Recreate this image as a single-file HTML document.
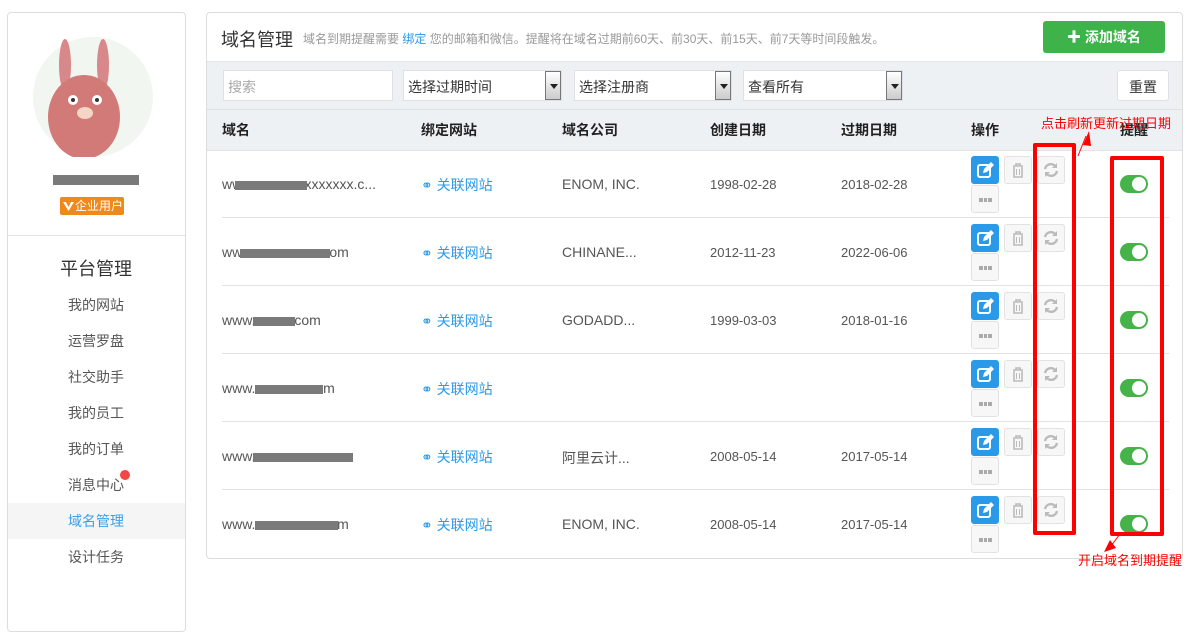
<!DOCTYPE html>
<html><head><meta charset="utf-8"><style>
*{box-sizing:border-box;margin:0;padding:0}
body{width:1194px;height:574px;overflow:hidden;background:#fff;font-family:"Liberation Sans","Noto Sans CJK SC",sans-serif;position:relative;color:#555}
.abs{position:absolute}
.side{left:7px;top:12px;width:179px;height:620px;border:1px solid #ddd;border-radius:4px;background:#fff}
.menu{position:absolute;left:68px;font-size:14px;color:#555}
.main{left:206px;top:12px;width:977px;height:547px;border:1px solid #ddd;border-radius:4px;background:#fff;overflow:hidden}
.inp{position:absolute;top:70px;height:31px;background:#fff;border:1px solid #dde0e4;font-size:14px;color:#333;padding:6px 4px}
.arrow{position:absolute;right:0;top:0;width:16px;height:29px;border:1px solid #777;background:linear-gradient(#fff,#ccc)}
.arrow:after{content:"";position:absolute;left:4px;top:12px;border:4px solid transparent;border-top:5px solid #222}
.th{position:absolute;top:120px;font-size:14px;font-weight:bold;color:#222}
.td{position:absolute;font-size:14px;color:#555}
.link{color:#2a9ae8}
.blur{position:absolute;height:9px;background:#7a7a7a}
.line{position:absolute;left:222px;width:947px;height:1px;background:#e3e3e3}
.b{position:absolute;width:28px;height:28px;border:1px solid #e2e2e2;border-radius:3px;background:#f7f7f7}
.be{background:#2a9ae8;border-color:#2a9ae8}
.tog{position:absolute;width:28px;height:18px;border-radius:9px;background:#45b349}
.tog:after{content:"";position:absolute;right:2px;top:2px;width:14px;height:14px;border-radius:50%;background:#fff}
.red{position:absolute;border:4px solid #f00;border-radius:2px}
</style></head><body>
<div class="abs side">
  <div class="abs" style="left:25px;top:24px;width:120px;height:120px;border-radius:50%;background:#f1f6f1"></div>
  <svg class="abs" style="left:25px;top:24px" width="120" height="120" viewBox="0 0 120 120">
    <ellipse cx="32" cy="28" rx="6" ry="26" fill="#d8888a"/><ellipse cx="70" cy="28" rx="6" ry="26" fill="#d8888a"/>
    <ellipse cx="51" cy="80" rx="36" ry="42" fill="#d27a78"/>
    <circle cx="40" cy="63" r="5" fill="#fff"/><circle cx="64" cy="63" r="5" fill="#fff"/>
    <circle cx="40" cy="63" r="2" fill="#333"/><circle cx="64" cy="63" r="2" fill="#333"/>
    <ellipse cx="52" cy="76" rx="8" ry="6" fill="#f3d6c6"/>
  </svg>
  <div class="abs" style="left:45px;top:162px;width:86px;height:10px;background:#7a7a7a"></div>
  <div class="abs" style="left:52px;top:184px;width:64px;height:18px;background:#f0891c;border-radius:2px;color:#fff;font-size:12px;line-height:18px;padding-left:15px;white-space:nowrap;overflow:visible">企业用户</div>
  <svg class="abs" style="left:54px;top:187px" width="13" height="12"><path d="M1 2h3l2.5 5L9 2h3L6.5 11z" fill="#fff"/></svg>
  <div class="abs" style="left:0;top:222px;width:177px;height:1px;background:#e3e3e3"></div>
  <div class="abs" style="left:52px;top:242px;font-size:18px;color:#333">平台管理</div>
  <div class="menu" style="top:282px;left:60px">我的网站</div>
  <div class="menu" style="top:318px;left:60px">运营罗盘</div>
  <div class="menu" style="top:354px;left:60px">社交助手</div>
  <div class="menu" style="top:390px;left:60px">我的员工</div>
  <div class="menu" style="top:426px;left:60px">我的订单</div>
  <div class="menu" style="top:462px;left:60px">消息中心</div>
  <div class="abs" style="left:112px;top:457px;width:10px;height:10px;border-radius:50%;background:#f04848"></div>
  <div class="abs" style="left:0;top:490px;width:177px;height:36px;background:#f5f5f5"></div>
  <div class="menu" style="top:498px;left:60px;color:#3a9fe8">域名管理</div>
  <div class="menu" style="top:534px;left:60px">设计任务</div>
</div>
<div class="abs main">
  <div class="abs" style="left:14px;top:13px;font-size:18px;color:#333">域名管理</div>
  <div class="abs" style="left:96px;top:17px;font-size:12px;color:#999">域名到期提醒需要 <span class="link">绑定</span> 您的邮箱和微信。提醒将在域名过期前60天、前30天、前15天、前7天等时间段触发。</div>
  <div class="abs" style="left:836px;top:8px;width:122px;height:32px;background:#3db34a;border-radius:3px;color:#fff;font-size:14px;font-weight:bold;line-height:32px;text-align:center">✚ 添加域名</div>
  <div class="abs" style="left:0;top:48px;width:977px;height:90px;background:#eef1f4;border-top:1px solid #e3e6ea"></div>
  <div class="abs" style="left:0;top:96px;width:977px;height:1px;background:#dde1e5"></div>
  <div class="abs" style="left:0;top:137px;width:977px;height:1px;background:#e3e3e3"></div>
</div>
<div class="inp" style="left:223px;width:170px;color:#aaa">搜索</div>
<div class="inp" style="left:403px;width:159px">选择过期时间<div class="arrow"></div></div>
<div class="inp" style="left:574px;width:158px">选择注册商<div class="arrow"></div></div>
<div class="inp" style="left:743px;width:160px">查看所有<div class="arrow"></div></div>
<div class="inp" style="left:1117px;width:52px;border-radius:3px;text-align:center">重置</div>
<div class="th" style="left:222px">域名</div><div class="th" style="left:421px">绑定网站</div><div class="th" style="left:562px">域名公司</div><div class="th" style="left:710px">创建日期</div><div class="th" style="left:841px">过期日期</div><div class="th" style="left:971px">操作</div><div class="th" style="left:1120px">提醒</div>

<div class="td" style="left:222px;top:176px">www.xxxxxxxxxxxxxx.c...</div><div class="blur" style="left:235px;top:181px;width:72px"></div>
<div class="td" style="left:222px;top:244px">www.xxxxxxxxx.com</div><div class="blur" style="left:240px;top:249px;width:90px"></div>
<div class="td" style="left:222px;top:312px">www.xxxxx.com</div><div class="blur" style="left:253px;top:317px;width:42px"></div>
<div class="td" style="left:222px;top:380px">www.xxxxxxx.com</div><div class="blur" style="left:255px;top:385px;width:68px"></div>
<div class="td" style="left:222px;top:448px">www.xxxxxxxxxxx.cn</div><div class="blur" style="left:253px;top:453px;width:100px"></div>
<div class="td" style="left:222px;top:516px">www.xxxxxxxxx.com</div><div class="blur" style="left:255px;top:521px;width:83px"></div>

<div class="td link" style="left:421px;top:175px">⚭ 关联网站</div>
<div class="td link" style="left:421px;top:243px">⚭ 关联网站</div>
<div class="td link" style="left:421px;top:311px">⚭ 关联网站</div>
<div class="td link" style="left:421px;top:379px">⚭ 关联网站</div>
<div class="td link" style="left:421px;top:447px">⚭ 关联网站</div>
<div class="td link" style="left:421px;top:515px">⚭ 关联网站</div>

<div class="td" style="left:562px;top:176px">ENOM, INC.</div>
<div class="td" style="left:562px;top:244px">CHINANE...</div>
<div class="td" style="left:562px;top:312px">GODADD...</div>
<div class="td" style="left:562px;top:448px">阿里云计...</div>
<div class="td" style="left:562px;top:516px">ENOM, INC.</div>

<div class="td" style="left:710px;top:177px;font-size:13px">1998-02-28</div><div class="td" style="left:841px;top:177px;font-size:13px">2018-02-28</div>
<div class="td" style="left:710px;top:245px;font-size:13px">2012-11-23</div><div class="td" style="left:841px;top:245px;font-size:13px">2022-06-06</div>
<div class="td" style="left:710px;top:313px;font-size:13px">1999-03-03</div><div class="td" style="left:841px;top:313px;font-size:13px">2018-01-16</div>
<div class="td" style="left:710px;top:449px;font-size:13px">2008-05-14</div><div class="td" style="left:841px;top:449px;font-size:13px">2017-05-14</div>
<div class="td" style="left:710px;top:517px;font-size:13px">2008-05-14</div><div class="td" style="left:841px;top:517px;font-size:13px">2017-05-14</div>

<div class="line" style="top:217px"></div><div class="line" style="top:285px"></div><div class="line" style="top:353px"></div><div class="line" style="top:421px"></div><div class="line" style="top:489px"></div>

<div id="ops"></div>
<script>
var h='';
for(var i=0;i<6;i++){var y=156+i*68;
h+='<div class="b be" style="left:971px;top:'+y+'px"><svg width="26" height="26" viewBox="0 0 26 26"><rect x="6" y="8" width="12" height="12" rx="2" fill="none" stroke="#fff" stroke-width="2"/><path d="M11 16l1-4 7-7 3 3-7 7z" fill="#fff"/></svg></div>';
h+='<div class="b" style="left:1004px;top:'+y+'px"><svg width="26" height="26" viewBox="0 0 26 26"><path d="M8 9h10M11 9V7h4v2M9 10v10h8V10" fill="none" stroke="#bbb" stroke-width="1.6"/><path d="M11.5 12v6M14.5 12v6" stroke="#bbb"/></svg></div>';
h+='<div class="b" style="left:1037px;top:'+y+'px"><svg width="26" height="26" viewBox="0 0 26 26"><path d="M7 12a6 6 0 0 1 11-2M19 14a6 6 0 0 1-11 2" fill="none" stroke="#bbb" stroke-width="2.4"/><path d="M19 6v5h-5zM7 20v-5h5z" fill="#bbb"/></svg></div>';
h+='<div class="b" style="left:971px;top:'+(y+29)+'px"><div style="position:absolute;left:7px;top:12px;width:13px;height:4px;border-left:4px solid #aaa;border-right:4px solid #aaa;background:linear-gradient(90deg,transparent 1px,#aaa 1px,#aaa 4px,transparent 4px)"></div></div>';
h+='<div class="tog" style="left:1120px;top:'+(y+19)+'px"></div>';}
document.getElementById('ops').innerHTML=h;
</script>
<div class="red" style="left:1033px;top:143px;width:43px;height:392px"></div>
<div class="red" style="left:1110px;top:156px;width:54px;height:380px"></div>
<div class="abs" style="left:1041px;top:113px;font-size:13px;color:#f00">点击刷新更新过期日期</div>
<svg class="abs" style="left:1074px;top:128px" width="20" height="30"><path d="M4 28L12 8" stroke="#f00" stroke-width="1"/><path d="M9 17l6-14 2 15z" fill="#f00"/></svg>
<div class="abs" style="left:1078px;top:550px;font-size:13px;color:#f00">开启域名到期提醒</div>
<svg class="abs" style="left:1100px;top:532px" width="30" height="22"><path d="M20 2L8 18" stroke="#f00"/><path d="M4 20l12-4-6-8z" fill="#f00"/></svg>
</body></html>
